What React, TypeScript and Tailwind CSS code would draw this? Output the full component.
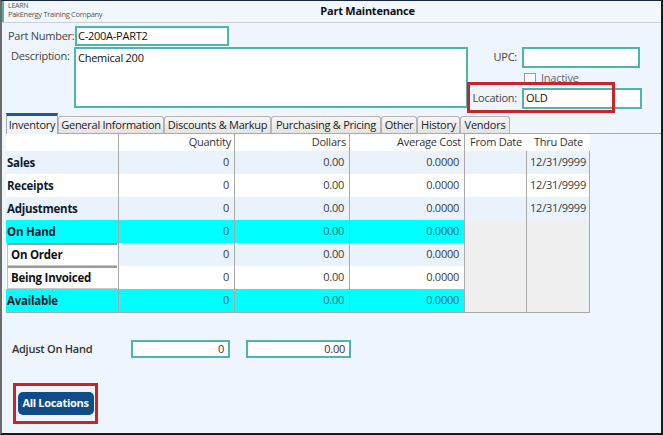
import React from 'react';

const font = { fontFamily: '"Open Sans", "Noto Sans", sans-serif' };

type Row = {
  label: string;
  qty: string;
  dollars: string;
  avg: string;
  thru?: string;
  kind: 'light' | 'white' | 'cyan';
  boxed?: boolean;
};

const rows: Row[] = [
  { label: 'Sales', qty: '0', dollars: '0.00', avg: '0.0000', thru: '12/31/9999', kind: 'light' },
  { label: 'Receipts', qty: '0', dollars: '0.00', avg: '0.0000', thru: '12/31/9999', kind: 'white' },
  { label: 'Adjustments', qty: '0', dollars: '0.00', avg: '0.0000', thru: '12/31/9999', kind: 'light' },
  { label: 'On Hand', qty: '0', dollars: '0.00', avg: '0.0000', kind: 'cyan' },
  { label: 'On Order', qty: '0', dollars: '0.00', avg: '0.0000', kind: 'light', boxed: true },
  { label: 'Being Invoiced', qty: '0', dollars: '0.00', avg: '0.0000', kind: 'white', boxed: true },
  { label: 'Available', qty: '0', dollars: '0.00', avg: '0.0000', kind: 'cyan' },
];

const tabs = [
  { name: 'Inventory', w: 'w-[52px]' },
  { name: 'General Information', w: 'w-[106px]' },
  { name: 'Discounts & Markup', w: 'w-[107px]' },
  { name: 'Purchasing & Pricing', w: 'w-[110px]' },
  { name: 'Other', w: 'w-[36px]' },
  { name: 'History', w: 'w-[43px]' },
  { name: 'Vendors', w: 'w-[50px]' },
];

function GridRow({ r, idx }: { r: Row; idx: number }) {
  const bg = r.kind === 'cyan' ? 'bg-[#00ffff]' : r.kind === 'light' ? 'bg-[#eaf2fb]' : 'bg-white';
  const num = r.kind === 'cyan' ? 'text-[#1f6f7a]' : 'text-[#3a3a3a]';
  const early = idx < 3;
  const dateBg = early ? bg : 'bg-[#efefef]';
  return (
    <>
      <div className={`h-[23px] border-r border-[#a9a9a9] ${r.boxed ? 'bg-white px-[1px]' : bg}`}>
        {r.boxed ? (
          <div className="h-full flex items-center border-t-2 border-b border-l border-t-[#9a9a9a] border-b-[#c8c8c8] border-l-[#bdbdbd] pl-[3px] text-[11.5px] font-bold text-[#111]">
            {r.label}
          </div>
        ) : (
          <div className="h-full flex items-center pl-[1px] text-[11.5px] font-bold text-[#0e1a2b]">{r.label}</div>
        )}
      </div>
      <div className={`h-[23px] border-r border-[#a9a9a9] ${bg} flex items-center justify-end pr-[5px] text-[11px] ${num}`}>{r.qty}</div>
      <div className={`h-[23px] border-r border-[#a9a9a9] ${bg} flex items-center justify-end pr-[5px] text-[11px] ${num}`}>{r.dollars}</div>
      <div className={`h-[23px] border-r border-[#a9a9a9] ${bg} flex items-center justify-end pr-[5px] text-[11px] ${num}`}>{r.avg}</div>
      <div className={`h-[23px] border-r border-[#a9a9a9] ${dateBg}`} />
      <div className={`h-[23px] border-r border-[#a9a9a9] ${dateBg} flex items-center justify-center text-[11px] text-[#3a3a3a]`}>
        {r.thru}
      </div>
    </>
  );
}

export default function App() {
  return (
    <div
      className="w-[663px] h-[435px] bg-[#eff5fd] border-t border-t-[#1a2740] border-l-2 border-l-[#6b6b6b] border-r-2 border-r-[#1a1a1a] border-b-2 border-b-[#1a1a1a] flex flex-col overflow-hidden tracking-[-0.25px]"
      style={font}
    >
      {/* header */}
      <div className="h-[22px] shrink-0 flex border-b border-[#c9d0d6] bg-[#f2f7fc]">
        <div className="w-[72px] border-l-2 border-[#5fae9c] pl-[4px] leading-none text-[#555]">
          <div className="text-[7px] pt-[1px]">LEARN</div>
          <div className="text-[7.5px] pt-[2px] whitespace-nowrap tracking-[-0.3px]">PakEnergy Training Company</div>
        </div>
        <div className="flex-1 flex items-center justify-center text-[11px] font-bold text-[#111]">Part Maintenance</div>
      </div>

      {/* form */}
      <div className="flex pt-[3px] shrink-0">
        <div className="w-[466px]">
          <div className="flex items-center h-[20px]">
            <div className="ml-[6px] w-[67px] text-[11px] text-[#444] whitespace-nowrap">Part Number:</div>
            <div className="w-[154px] h-[20px] border-2 border-[#4db5ae] bg-white flex items-center pl-[1px] text-[11px] text-[#111]">
              C-200A-PART2
            </div>
          </div>
          <div className="flex mt-[1px]">
            <div className="ml-[9px] w-[63px] pt-[1px] text-[11px] text-[#444]">Description:</div>
            <div className="w-[394px] h-[61px] border-2 border-[#4db5ae] bg-white pl-[2px] pt-[1px] text-[11px] text-[#111]">
              Chemical 200
            </div>
          </div>
        </div>
        <div className="pt-[21px]">
          <div className="flex items-center h-[21px]">
            <div className="w-[54px] pr-[5px] text-right text-[11px] text-[#444]">UPC:</div>
            <div className="w-[118px] h-[21px] border-2 border-[#4db5ae] bg-white" />
          </div>
          <div className="flex items-center h-[15px] mt-[3px] ml-[56px]">
            <div className="w-[12px] h-[12px] border border-[#9a9a9a] bg-white" />
            <div className="ml-[5px] text-[11px] text-[#666]">Inactive</div>
          </div>
          <div className="relative flex items-center h-[21px] mt-[2px]">
            <div className="w-[54px] pr-[5px] text-right text-[11px] text-[#444]">Location:</div>
            <div className="w-[120px] h-[21px] border-2 border-[#4db5ae] bg-white flex items-center pl-[2px] text-[11px] text-[#111]">
              OLD
            </div>
            <div className="absolute left-[-1px] top-[-6px] w-[148px] h-[31px] border-[3px] border-[#c4262c] pointer-events-none" />
          </div>
        </div>
      </div>

      {/* tabs */}
      <div className="mt-[5px] ml-[4px] flex items-end h-[20px] shrink-0 border-b border-[#a9a9a9]">
        {tabs.map((t, i) =>
          i === 0 ? (
            <div
              key={t.name}
              className={`${t.w} h-[21px] -mb-[1px] border-t-[3px] border-t-[#1f5a96] border-x border-x-[#a9a9a9] bg-[#eff5fd] flex items-center justify-center text-[11px] text-[#222] whitespace-nowrap`}
            >
              {t.name}
            </div>
          ) : (
            <div
              key={t.name}
              className={`${t.w} h-[17px] border border-b-0 border-[#b4b4b4] rounded-t-[3px] bg-gradient-to-b from-[#f6f6f6] to-[#e3e3e3] flex items-center justify-center text-[11px] text-[#222] whitespace-nowrap overflow-hidden`}
            >
              {t.name}
            </div>
          )
        )}
      </div>

      {/* grid */}
      <div className="ml-[4px] w-[584px] grid grid-cols-[113px_116px_115px_115px_62px_63px] border-b border-[#a9a9a9] shrink-0">
        <div className="h-[17px] bg-white border-r border-[#a9a9a9]" />
        <div className="h-[17px] bg-white border-r border-[#a9a9a9] flex items-center justify-end pr-[3px] text-[11px] text-[#333]">Quantity</div>
        <div className="h-[17px] bg-white border-r border-[#a9a9a9] flex items-center justify-end pr-[3px] text-[11px] text-[#333]">Dollars</div>
        <div className="h-[17px] bg-white border-r border-[#a9a9a9] flex items-center justify-end pr-[3px] text-[11px] text-[#333]">Average Cost</div>
        <div className="h-[17px] bg-white flex items-center justify-center text-[11px] text-[#333] whitespace-nowrap">From Date</div>
        <div className="h-[17px] bg-white flex items-center justify-center text-[11px] text-[#333] whitespace-nowrap">Thru Date</div>
        {rows.map((r, i) => (
          <GridRow key={r.label} r={r} idx={i} />
        ))}
      </div>

      {/* adjust on hand */}
      <div className="flex items-center mt-[27px] h-[18px] shrink-0">
        <div className="ml-[10px] w-[119px] text-[11px] font-semibold text-[#333]">Adjust On Hand</div>
        <div className="w-[99px] h-[18px] border-2 border-[#4db5ae] bg-white flex items-center justify-end pr-[4px] text-[11px] text-[#333]">0</div>
        <div className="ml-[16px] w-[105px] h-[18px] border-2 border-[#4db5ae] bg-white flex items-center justify-end pr-[4px] text-[11px] text-[#333]">0.00</div>
      </div>

      {/* all locations */}
      <div className="mt-[25px] ml-[11px] w-[85px] h-[41px] border-[3px] border-[#c4262c] flex items-center justify-center shrink-0">
        <button className="w-[76px] h-[23px] rounded-[5px] bg-[#0f4c89] text-white text-[11px] font-bold whitespace-nowrap tracking-[-0.3px]">
          All Locations
        </button>
      </div>
    </div>
  );
}
